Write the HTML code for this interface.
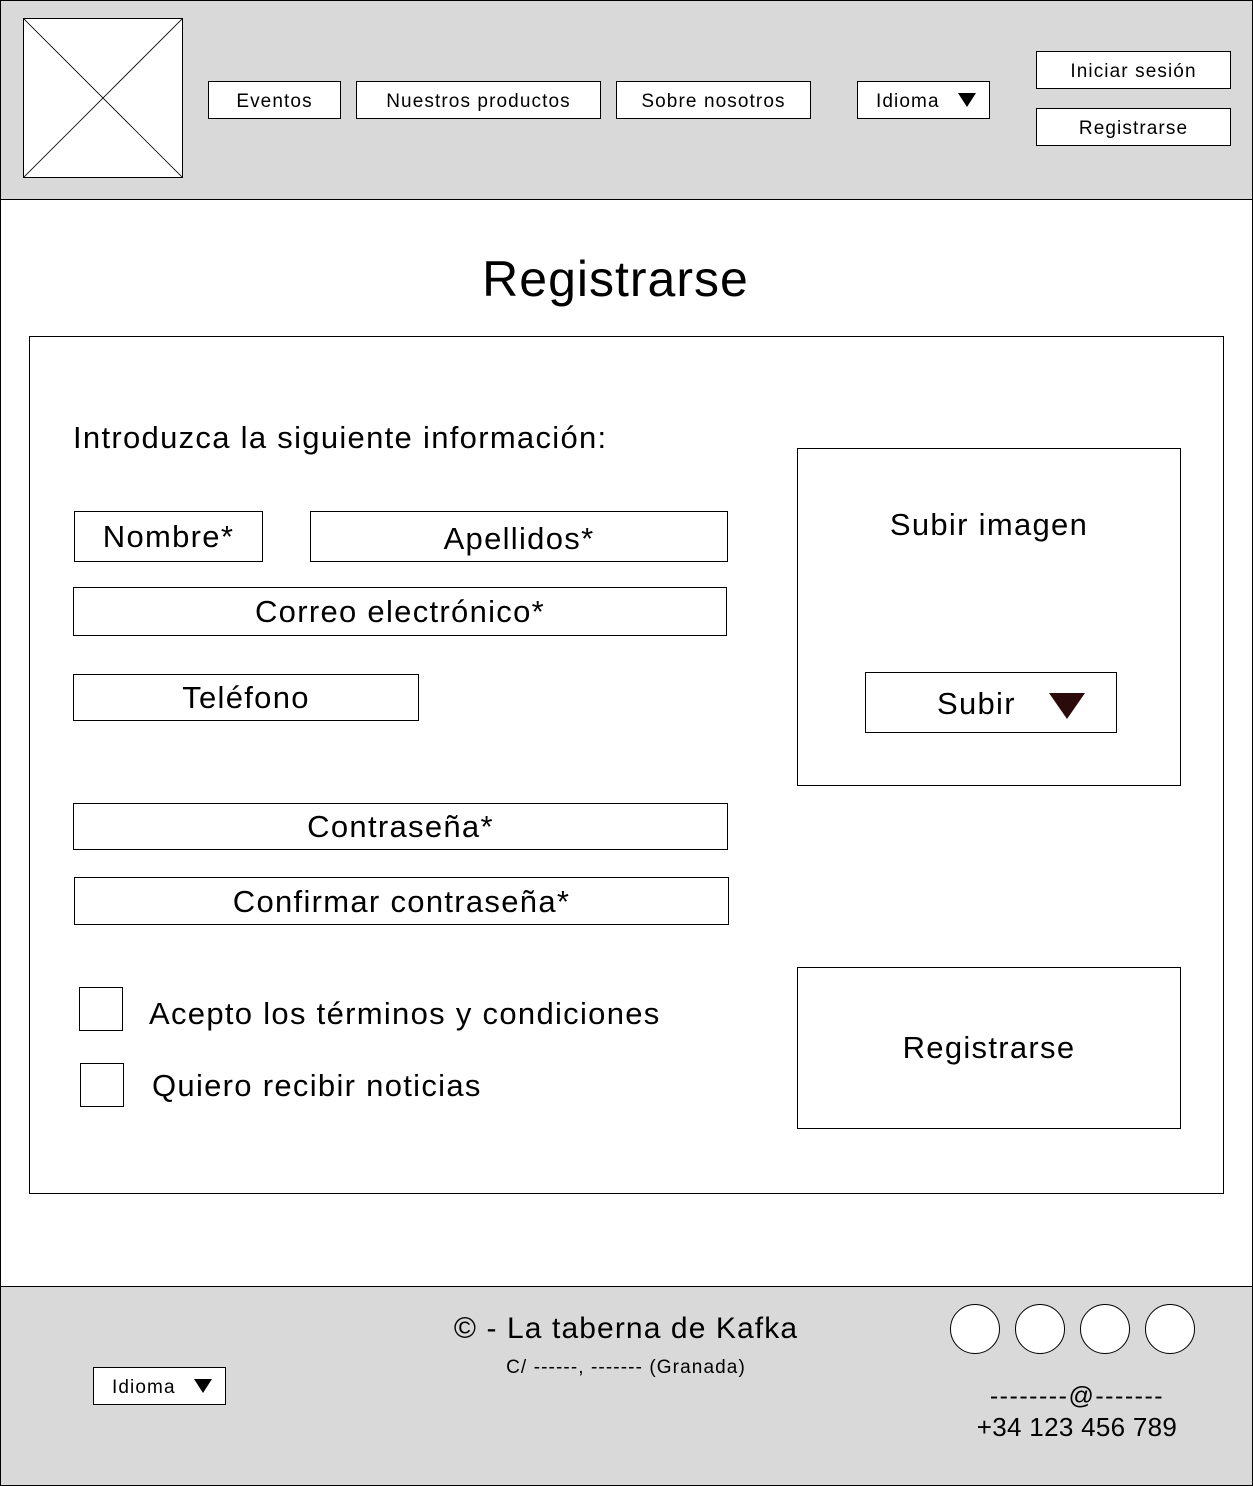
<!DOCTYPE html>
<html><head><meta charset="utf-8"><style>
*{margin:0;padding:0;box-sizing:border-box}
body{width:1253px;height:1486px;position:relative;background:#fff;font-family:"Liberation Sans",sans-serif;color:#000;overflow:hidden}
.a{position:absolute}
.b{position:absolute;border:1px solid #000;background:#fff;display:flex;align-items:center;justify-content:center;white-space:nowrap}
.t{position:absolute;white-space:nowrap;line-height:1}
.f{font-size:31px;letter-spacing:1.3px}
.h{font-size:19px;letter-spacing:1.1px;padding-top:3px}
</style></head><body>
<div class="a" style="left:0;top:0;width:1253px;height:200px;background:#d9d9d9;border:1px solid #000"></div>
<div class="a" style="left:0;top:199px;width:1253px;height:1088px;border-left:1px solid #000;border-right:1px solid #000"></div>
<div class="a" style="left:0;top:1286px;width:1253px;height:200px;background:#d9d9d9;border:1px solid #000"></div>

<svg class="a" style="left:23px;top:18px" width="160" height="160"><rect x="0.5" y="0.5" width="159" height="159" fill="#fff" stroke="#000"/><line x1="0" y1="0" x2="160" y2="160" stroke="#000" stroke-width="0.8"/><line x1="160" y1="0" x2="0" y2="160" stroke="#000" stroke-width="0.8"/></svg>

<div class="b h" style="left:208px;top:81px;width:133px;height:38px">Eventos</div>
<div class="b h" style="left:356px;top:81px;width:245px;height:38px">Nuestros productos</div>
<div class="b h" style="left:616px;top:81px;width:195px;height:38px">Sobre nosotros</div>
<div class="b h" style="left:857px;top:81px;width:133px;height:38px;justify-content:flex-start;padding-left:18px">Idioma</div>
<svg class="a" style="left:958px;top:93px" width="18" height="14"><polygon points="0,0 18,0 9,14" fill="#000"/></svg>
<div class="b h" style="left:1036px;top:51px;width:195px;height:38px">Iniciar sesión</div>
<div class="b h" style="left:1036px;top:108px;width:195px;height:38px">Registrarse</div>

<div class="t" style="left:0;width:1231px;text-align:center;top:254px;font-size:50px;letter-spacing:1px">Registrarse</div>

<div class="a" style="left:29px;top:336px;width:1195px;height:858px;border:1px solid #000"></div>
<div class="t f" style="left:73px;top:422px">Introduzca la siguiente información:</div>

<div class="b f" style="left:74px;top:511px;width:189px;height:51px">Nombre*</div>
<div class="b f" style="left:310px;top:511px;width:418px;height:51px;padding-top:4px">Apellidos*</div>
<div class="b f" style="left:73px;top:587px;width:654px;height:49px">Correo electrónico*</div>
<div class="b f" style="left:73px;top:674px;width:346px;height:47px">Teléfono</div>
<div class="b f" style="left:73px;top:803px;width:655px;height:47px">Contraseña*</div>
<div class="b f" style="left:74px;top:877px;width:655px;height:48px;padding-top:2px">Confirmar contraseña*</div>

<div class="a" style="left:79px;top:987px;width:44px;height:44px;border:1px solid #000"></div>
<div class="t f" style="left:149px;top:998px">Acepto los términos y condiciones</div>
<div class="a" style="left:80px;top:1063px;width:44px;height:44px;border:1px solid #000"></div>
<div class="t f" style="left:152px;top:1070px">Quiero recibir noticias</div>

<div class="a" style="left:797px;top:448px;width:384px;height:338px;border:1px solid #000"></div>
<div class="t f" style="left:797px;width:384px;text-align:center;top:509px">Subir imagen</div>
<div class="b f" style="left:865px;top:672px;width:252px;height:61px;justify-content:flex-start;padding-left:71px;padding-top:3px">Subir</div>
<svg class="a" style="left:1049px;top:693px" width="36" height="26"><polygon points="0,0 36,0 18,26" fill="#2a0a0a"/></svg>

<div class="b f" style="left:797px;top:967px;width:384px;height:162px">Registrarse</div>

<div class="t" style="left:400px;width:452px;text-align:center;top:1314px;font-size:30px;letter-spacing:1.1px">© - La taberna de Kafka</div>
<div class="t" style="left:400px;width:452px;text-align:center;top:1358px;font-size:19px;letter-spacing:1.1px">C/ ------, ------- (Granada)</div>
<div class="b h" style="left:93px;top:1367px;width:133px;height:38px;justify-content:flex-start;padding-left:18px">Idioma</div>
<svg class="a" style="left:194px;top:1379px" width="18" height="14"><polygon points="0,0 18,0 9,14" fill="#000"/></svg>

<div class="a" style="left:950px;top:1304px;width:50px;height:50px;border-radius:50%;border:1px solid #000;background:#fff"></div>
<div class="a" style="left:1015px;top:1304px;width:50px;height:50px;border-radius:50%;border:1px solid #000;background:#fff"></div>
<div class="a" style="left:1080px;top:1304px;width:50px;height:50px;border-radius:50%;border:1px solid #000;background:#fff"></div>
<div class="a" style="left:1145px;top:1304px;width:50px;height:50px;border-radius:50%;border:1px solid #000;background:#fff"></div>
<div class="t" style="left:960px;width:234px;text-align:center;top:1384px;font-size:25px;letter-spacing:1.5px">--------@-------</div>
<div class="t" style="left:960px;width:234px;text-align:center;top:1414px;font-size:26px;letter-spacing:0.3px">+34 123 456 789</div>
</body></html>
